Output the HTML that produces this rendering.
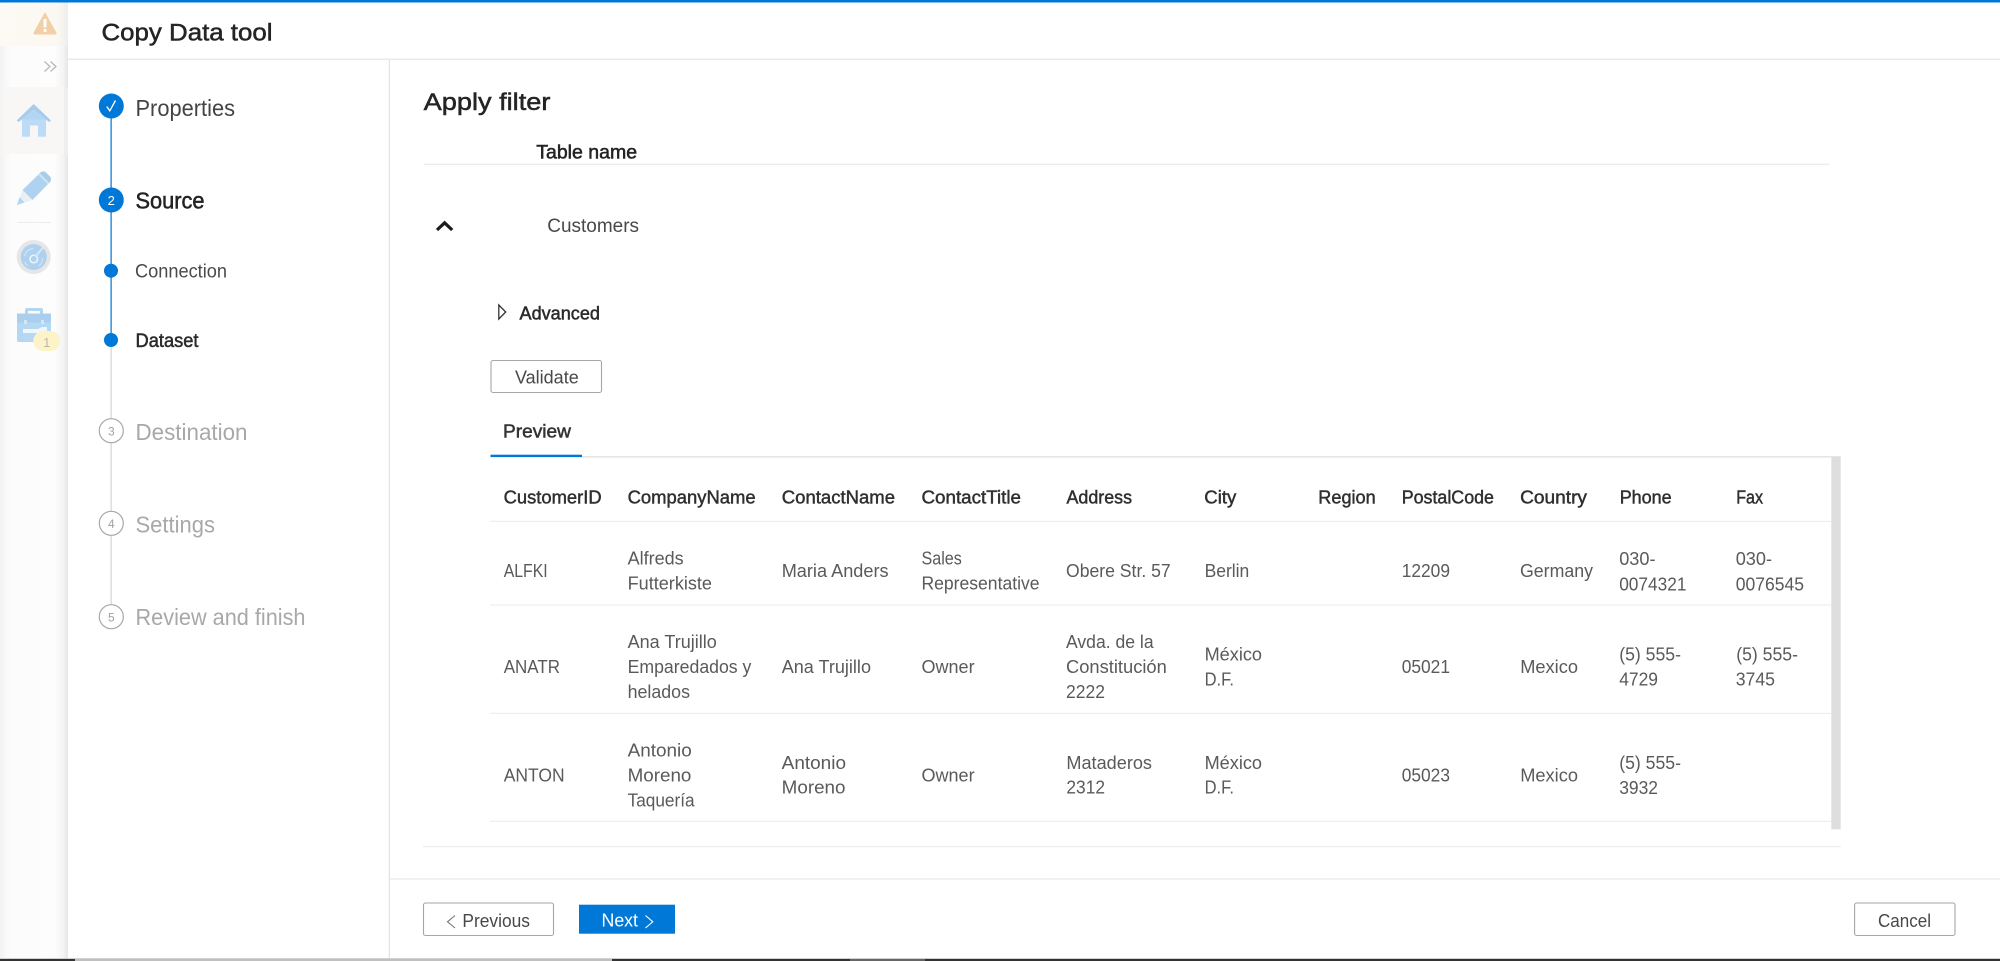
<!DOCTYPE html>
<html lang="en">
<head>
<meta charset="utf-8">
<title>Copy Data tool</title>
<style>
html,body{margin:0;padding:0;background:#fff;width:2000px;height:961px;overflow:hidden}
svg{display:block;position:absolute;left:0;top:0}
text{font-family:"Liberation Sans",sans-serif;white-space:pre}
.s{stroke-width:.5px}
.h{font-size:18.5px;fill:#2f2f2f;stroke:#2f2f2f;stroke-width:.45px}
.c{font-size:18.5px;fill:#5a5a5a}
.g{font-size:23px;fill:#a8a8a8}
.n{font-size:12px;fill:#a0a0a0;text-anchor:middle}
</style>
</head>
<body>
<svg width="2000" height="961" viewBox="0 0 2000 961" xmlns="http://www.w3.org/2000/svg">
<defs>
<linearGradient id="side" x1="0" x2="1" y1="0" y2="0">
<stop offset="0" stop-color="#f3f3f3"/><stop offset=".15" stop-color="#fcfcfc"/><stop offset=".8" stop-color="#fdfdfd"/><stop offset=".93" stop-color="#f4f4f4"/><stop offset="1" stop-color="#e6e6e6"/>
</linearGradient>
<linearGradient id="warnbg" x1="0" x2="1" y1="0" y2="0">
<stop offset="0" stop-color="#fdf9f3"/><stop offset=".85" stop-color="#fbf7f2"/><stop offset="1" stop-color="#efeeec"/>
</linearGradient>
</defs>

<!-- Sidebar -->
<rect x="0" y="0" width="68" height="961" fill="url(#side)"/>
<rect x="0" y="3" width="68" height="43" fill="url(#warnbg)"/>
<rect x="4" y="87" width="64" height="67" fill="#f8f7f6"/>
<rect x="64" y="87" width="4" height="67" fill="#efefee"/>

<!-- Warning icon -->
<path d="M45 13 L56 33 Q56.400 34 55 34 L35 34 Q33.600 34 34 33 Z" fill="#f2cfa6" stroke="#f2cfa6" stroke-linejoin="round"/>
<rect x="43.600" y="19" width="2.900" height="8.500" fill="#fff"/>
<rect x="43.600" y="29" width="2.900" height="2.900" fill="#fff"/>

<!-- Expand -->
<path d="M44.500 61.500 L50 66.500 L44.500 71.500 M50.500 61.500 L56 66.500 L50.500 71.500" fill="none" stroke="#b5b5b8" stroke-width="1.200"/>

<g opacity=".88">
<!-- Home -->
<path d="M22 118 H46 V136.700 H38 V125.500 H30 V136.700 H22 Z" fill="#b5d8f6"/>
<path d="M33.700 104 L51 120.500 L49 122 L33.700 109.500 L18.700 122 L16.700 120.500 Z" fill="#9cc6ea"/>
<path d="M33.700 109.500 L46 119.500 H21.500 Z" fill="#a9d1f3"/>

<!-- Pencil -->
<path d="M22.500 190 L41 172 L50.500 181.500 L32.500 200 Z" fill="#a4cdee"/>
<path d="M41 172 Q44 170.500 46 172.500 L50 176.500 Q51.800 179 50.500 181.500 L48.500 183 L39.500 174 Z" fill="#9ec6e6"/>
<path d="M38.500 175 L40 173.500 L49 182.500 L47.500 184 Z" fill="#bde4f3"/>
<path d="M22.500 190 L32.500 200 L17 205 Z" fill="#e6eef5"/>
<path d="M19.500 197 L24.500 202.500 L17 205 Z" fill="#a9d3f2"/>

<!-- Gauge -->
<circle cx="33.700" cy="257" r="17" fill="#e3e3e3"/>
<circle cx="33.700" cy="257" r="13" fill="#a4ccee"/>
<circle cx="33.700" cy="259" r="3.800" fill="none" stroke="#eaf4fb" stroke-width="1.500"/>
<path d="M35.500 256.500 L43 247.500" stroke="#cfe9f7" stroke-width="1.800" fill="none"/>
<path d="M24.500 256 A10 10 0 0 1 33 248.500 M24.500 262 A10 10 0 0 0 28 266 M42.500 258 A10 10 0 0 1 39 266" fill="none" stroke="#cbe2f5" stroke-width="1.200"/>

<!-- Briefcase -->
<path d="M25 314 V310 Q25 308 27 308 H41 Q43 308 43 310 V314 H40 V311 H28 V314 Z" fill="#a8d0f0"/>
<rect x="17" y="313.500" width="34" height="28.500" rx="1.500" fill="#acd3f2"/>
<rect x="17" y="313.500" width="34" height="9" fill="#9fc9ec"/>
<rect x="24" y="320" width="3" height="4" fill="#cfe4f6"/>
<rect x="41" y="320" width="3" height="4" fill="#cfe4f6"/>
<path d="M23 329 H38 L42 327 H47 V331 H42 L38 333 H23 Z" fill="#eef6fc"/>
</g>
<!-- Separator -->
<rect x="17" y="222" width="34" height="1" fill="#ececec"/>
<rect x="33.300" y="331" width="27" height="20" rx="10" fill="#fdf3c8"/>
<text x="46.700" y="347" style="font-size:13px;fill:#bdb9a6;text-anchor:middle">1</text>

<!-- Top blue bar & header -->
<rect x="0" y="0" width="2000" height="2.500" fill="#0078d7"/>
<rect x="68" y="58.500" width="1932" height="1.500" fill="#eaeaea"/>
<text x="101.500" y="40.700" textLength="171" lengthAdjust="spacingAndGlyphs" class="s" style="font-size:24px;fill:#242424;stroke:#242424">Copy Data tool</text>

<!-- Vertical divider -->
<rect x="388.700" y="60" width="1.300" height="898" fill="#e4e4e4"/>

<!-- Stepper -->
<rect x="110.300" y="118" width="1.700" height="222" fill="#4a9de0"/>
<rect x="110.300" y="347" width="1.700" height="260" fill="#e0e0e0"/>
<circle cx="111.300" cy="106" r="12.500" fill="#0078d7"/>
<path d="M106.700 106.500 L109.800 110.800 L115.500 100.500" fill="none" stroke="#fff" stroke-width="1.300"/>
<circle cx="111.300" cy="200" r="12.500" fill="#0078d7"/>
<text x="111.300" y="205" style="font-size:13px;fill:#fff;text-anchor:middle">2</text>
<circle cx="111" cy="270.700" r="7" fill="#0078d7"/>
<circle cx="111" cy="340" r="7" fill="#0078d7"/>
<circle cx="111.300" cy="430.700" r="12" fill="#fff" stroke="#a8a8a8" stroke-width="1.200"/>
<text x="111.300" y="435.500" class="n">3</text>
<circle cx="111.300" cy="523.300" r="12" fill="#fff" stroke="#a8a8a8" stroke-width="1.200"/>
<text x="111.300" y="528" class="n">4</text>
<circle cx="111.300" cy="616.700" r="12" fill="#fff" stroke="#a8a8a8" stroke-width="1.200"/>
<text x="111.300" y="621.500" class="n">5</text>

<text x="135.500" y="116" textLength="99.500" lengthAdjust="spacingAndGlyphs" style="font-size:23px;fill:#444">Properties</text>
<text x="135.500" y="208.300" textLength="69" lengthAdjust="spacingAndGlyphs" class="s" style="font-size:23px;fill:#222;stroke:#222">Source</text>
<text x="135" y="277.700" textLength="92" lengthAdjust="spacingAndGlyphs" style="font-size:19px;fill:#4a4a4a">Connection</text>
<text x="135.500" y="347" textLength="63" lengthAdjust="spacingAndGlyphs" class="s" style="font-size:19px;fill:#2a2a2a;stroke:#2a2a2a">Dataset</text>
<text x="135.500" y="440" textLength="112" lengthAdjust="spacingAndGlyphs" class="g">Destination</text>
<text x="135.500" y="532.700" textLength="79.500" lengthAdjust="spacingAndGlyphs" class="g">Settings</text>
<text x="135.500" y="625" textLength="170" lengthAdjust="spacingAndGlyphs" class="g">Review and finish</text>

<!-- Main -->
<text x="423.700" y="110" textLength="126.700" lengthAdjust="spacingAndGlyphs" class="s" style="font-size:24px;fill:#242424;stroke:#242424">Apply filter</text>
<text x="536.200" y="158.300" textLength="101" lengthAdjust="spacingAndGlyphs" class="s" style="font-size:19.500px;fill:#222;stroke:#222">Table name</text>
<rect x="424" y="163.700" width="1405" height="1.200" fill="#e9e9e9"/>
<path d="M437 230 L444.600 222.800 L452.200 230" fill="none" stroke="#1c1c1c" stroke-width="3.200"/>
<text x="547.300" y="232.200" textLength="91.700" lengthAdjust="spacingAndGlyphs" style="font-size:19px;fill:#484848">Customers</text>
<path d="M498.800 305 L505.700 312 L498.800 319 Z" fill="none" stroke="#333" stroke-width="1.300"/>
<text x="519.500" y="319.300" textLength="80.500" lengthAdjust="spacingAndGlyphs" class="s" style="font-size:18.500px;fill:#2a2a2a;stroke:#2a2a2a">Advanced</text>
<rect x="491" y="360.500" width="110.500" height="32" rx="2" fill="#fff" stroke="#a6a6a6" stroke-width="1.100"/>
<text x="515" y="383.500" textLength="63.700" lengthAdjust="spacingAndGlyphs" style="font-size:18.500px;fill:#484848">Validate</text>
<text x="503" y="437.500" textLength="68" lengthAdjust="spacingAndGlyphs" class="s" style="font-size:18.500px;fill:#333;stroke:#333">Preview</text>
<rect x="490.500" y="456" width="1350" height="1.600" fill="#e5e5e5"/>
<rect x="490.500" y="454.700" width="91.500" height="2.300" fill="#0078d7"/>

<!-- Table lines -->
<rect x="1831.300" y="457" width="9.400" height="372.300" fill="#dedede"/>
<rect x="490" y="520.800" width="1341" height="1.200" fill="#eeeeee"/>
<rect x="490" y="604.500" width="1341" height="1.200" fill="#eeeeee"/>
<rect x="490" y="712.800" width="1341" height="1.200" fill="#eeeeee"/>
<rect x="490" y="820.800" width="1341" height="1.200" fill="#eeeeee"/>
<rect x="423" y="846" width="1417.700" height="1.300" fill="#eeeeee"/>

<!-- Table header -->
<text x="503.600" y="503.300" textLength="98" lengthAdjust="spacingAndGlyphs" class="h">CustomerID</text>
<text x="627.600" y="503.300" textLength="128" lengthAdjust="spacingAndGlyphs" class="h">CompanyName</text>
<text x="781.800" y="503.300" textLength="113.200" lengthAdjust="spacingAndGlyphs" class="h">ContactName</text>
<text x="921.500" y="503.300" textLength="99.500" lengthAdjust="spacingAndGlyphs" class="h">ContactTitle</text>
<text x="1066.500" y="503.300" textLength="65.500" lengthAdjust="spacingAndGlyphs" class="h">Address</text>
<text x="1204.300" y="503.300" textLength="32" lengthAdjust="spacingAndGlyphs" class="h">City</text>
<text x="1318.300" y="503.300" textLength="57.400" lengthAdjust="spacingAndGlyphs" class="h">Region</text>
<text x="1401.700" y="503.300" textLength="92.300" lengthAdjust="spacingAndGlyphs" class="h">PostalCode</text>
<text x="1520.100" y="503.300" textLength="66.900" lengthAdjust="spacingAndGlyphs" class="h">Country</text>
<text x="1619.700" y="503.300" textLength="52" lengthAdjust="spacingAndGlyphs" class="h">Phone</text>
<text x="1736.200" y="503.300" textLength="26.800" lengthAdjust="spacingAndGlyphs" class="h">Fax</text>

<!-- Row 1 -->
<text x="503.700" y="577" textLength="44" lengthAdjust="spacingAndGlyphs" class="c">ALFKI</text>
<text x="627.600" y="564.700" textLength="56" lengthAdjust="spacingAndGlyphs" class="c">Alfreds</text>
<text x="627.600" y="589.700" textLength="84.400" lengthAdjust="spacingAndGlyphs" class="c">Futterkiste</text>
<text x="781.700" y="577" textLength="106.900" lengthAdjust="spacingAndGlyphs" class="c">Maria Anders</text>
<text x="921.500" y="564.700" textLength="40.300" lengthAdjust="spacingAndGlyphs" class="c">Sales</text>
<text x="921.500" y="589.700" textLength="118" lengthAdjust="spacingAndGlyphs" class="c">Representative</text>
<text x="1066" y="577" textLength="104.700" lengthAdjust="spacingAndGlyphs" class="c">Obere Str. 57</text>
<text x="1204.600" y="577" textLength="44.700" lengthAdjust="spacingAndGlyphs" class="c">Berlin</text>
<text x="1401.700" y="577" textLength="48.300" lengthAdjust="spacingAndGlyphs" class="c">12209</text>
<text x="1520" y="577" textLength="73" lengthAdjust="spacingAndGlyphs" class="c">Germany</text>
<text x="1619.200" y="565" textLength="36.300" lengthAdjust="spacingAndGlyphs" class="c">030-</text>
<text x="1619.200" y="590.300" textLength="67.300" lengthAdjust="spacingAndGlyphs" class="c">0074321</text>
<text x="1735.700" y="565" textLength="36.300" lengthAdjust="spacingAndGlyphs" class="c">030-</text>
<text x="1735.700" y="590.300" textLength="68.300" lengthAdjust="spacingAndGlyphs" class="c">0076545</text>

<!-- Row 2 -->
<text x="503.700" y="673" textLength="56.300" lengthAdjust="spacingAndGlyphs" class="c">ANATR</text>
<text x="627.600" y="648" textLength="89.200" lengthAdjust="spacingAndGlyphs" class="c">Ana Trujillo</text>
<text x="627.600" y="673" textLength="123.800" lengthAdjust="spacingAndGlyphs" class="c">Emparedados y</text>
<text x="627.600" y="698" textLength="62.400" lengthAdjust="spacingAndGlyphs" class="c">helados</text>
<text x="781.700" y="673" textLength="89.300" lengthAdjust="spacingAndGlyphs" class="c">Ana Trujillo</text>
<text x="921.500" y="673" textLength="53.100" lengthAdjust="spacingAndGlyphs" class="c">Owner</text>
<text x="1066" y="648" textLength="87.600" lengthAdjust="spacingAndGlyphs" class="c">Avda. de la</text>
<text x="1066" y="673" textLength="100.800" lengthAdjust="spacingAndGlyphs" class="c">Constitución</text>
<text x="1066" y="698" textLength="39" lengthAdjust="spacingAndGlyphs" class="c">2222</text>
<text x="1204.600" y="660.700" textLength="57.400" lengthAdjust="spacingAndGlyphs" class="c">México</text>
<text x="1204.600" y="685.700" textLength="29.400" lengthAdjust="spacingAndGlyphs" class="c">D.F.</text>
<text x="1401.700" y="673" textLength="48.300" lengthAdjust="spacingAndGlyphs" class="c">05021</text>
<text x="1520.200" y="673" textLength="57.800" lengthAdjust="spacingAndGlyphs" class="c">Mexico</text>
<text x="1619.200" y="660.400" textLength="61.800" lengthAdjust="spacingAndGlyphs" class="c">(5) 555-</text>
<text x="1619.200" y="685.700" textLength="38.800" lengthAdjust="spacingAndGlyphs" class="c">4729</text>
<text x="1736.200" y="660.400" textLength="61.800" lengthAdjust="spacingAndGlyphs" class="c">(5) 555-</text>
<text x="1735.700" y="685.700" textLength="39.300" lengthAdjust="spacingAndGlyphs" class="c">3745</text>

<!-- Row 3 -->
<text x="503.700" y="781.400" textLength="60.900" lengthAdjust="spacingAndGlyphs" class="c">ANTON</text>
<text x="627.600" y="756.400" textLength="64.200" lengthAdjust="spacingAndGlyphs" class="c">Antonio</text>
<text x="627.600" y="781.400" textLength="63.800" lengthAdjust="spacingAndGlyphs" class="c">Moreno</text>
<text x="627.600" y="806.400" textLength="67" lengthAdjust="spacingAndGlyphs" class="c">Taquería</text>
<text x="781.700" y="769" textLength="64.300" lengthAdjust="spacingAndGlyphs" class="c">Antonio</text>
<text x="781.700" y="793.700" textLength="63.800" lengthAdjust="spacingAndGlyphs" class="c">Moreno</text>
<text x="921.500" y="781.400" textLength="53.100" lengthAdjust="spacingAndGlyphs" class="c">Owner</text>
<text x="1066.400" y="769" textLength="85.600" lengthAdjust="spacingAndGlyphs" class="c">Mataderos</text>
<text x="1066.400" y="793.700" textLength="38.600" lengthAdjust="spacingAndGlyphs" class="c">2312</text>
<text x="1204.600" y="769" textLength="57.400" lengthAdjust="spacingAndGlyphs" class="c">México</text>
<text x="1204.600" y="793.700" textLength="29.400" lengthAdjust="spacingAndGlyphs" class="c">D.F.</text>
<text x="1401.700" y="781.400" textLength="48.300" lengthAdjust="spacingAndGlyphs" class="c">05023</text>
<text x="1520.200" y="781.400" textLength="57.800" lengthAdjust="spacingAndGlyphs" class="c">Mexico</text>
<text x="1619.200" y="769" textLength="61.800" lengthAdjust="spacingAndGlyphs" class="c">(5) 555-</text>
<text x="1619.200" y="794" textLength="38.800" lengthAdjust="spacingAndGlyphs" class="c">3932</text>

<!-- Footer -->
<rect x="390" y="878.300" width="1610" height="1.300" fill="#e8e8e8"/>
<rect x="423.500" y="903" width="130" height="32.500" rx="2" fill="#fff" stroke="#a6a6a6" stroke-width="1.100"/>
<path d="M455 915.500 L447.500 921.800 L455 928" fill="none" stroke="#777" stroke-width="1.100"/>
<text x="462.400" y="926.800" textLength="67.600" lengthAdjust="spacingAndGlyphs" style="font-size:18.500px;fill:#484848">Previous</text>
<rect x="579" y="904.700" width="96" height="29" fill="#0078d7"/>
<text x="601.500" y="926.700" textLength="36.500" lengthAdjust="spacingAndGlyphs" style="font-size:18.500px;fill:#fff">Next</text>
<path d="M645.500 915.500 L652.800 921.800 L645.500 928" fill="none" stroke="#fff" stroke-width="1.100"/>
<rect x="1854.600" y="903" width="100.400" height="32.500" rx="2" fill="#fff" stroke="#a6a6a6" stroke-width="1.100"/>
<text x="1878" y="926.800" textLength="53" lengthAdjust="spacingAndGlyphs" style="font-size:18.500px;fill:#484848">Cancel</text>

<!-- Bottom strip -->
<rect x="0" y="958" width="2000" height="1" fill="#d0d0d0"/>
<rect x="0" y="959" width="2000" height="2" fill="#333"/>
<rect x="75" y="959" width="537" height="2" fill="#c0c0c0"/>
<rect x="850" y="959" width="75" height="2" fill="#666"/>
</svg>
</body>
</html>
